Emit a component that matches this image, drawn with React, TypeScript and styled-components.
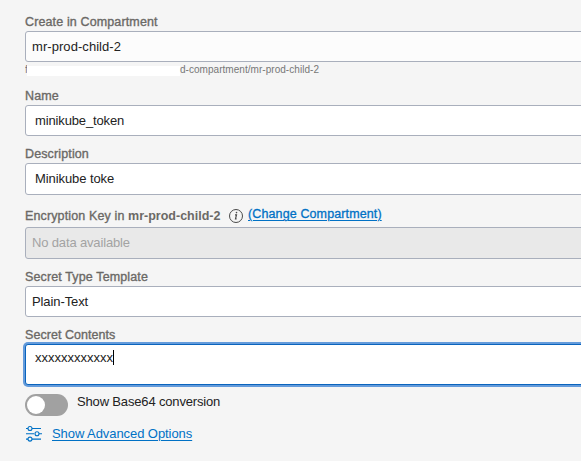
import React from "react";
import styled, { createGlobalStyle } from "styled-components";

const GlobalStyle = createGlobalStyle`
  * { box-sizing: border-box; }
  body { margin: 0; background: #f5f5f5; overflow: hidden; }
`;

const Form = styled.main`
  width: 100%;
  height: 461px;
  padding: 13px 0 0 25px;
  overflow: hidden;
  background: #f5f5f5;
  color: #222;
  font: 13px/18px "Liberation Sans", Arial, sans-serif;
`;

const Field = styled.section<{ $height: number }>`
  height: ${(p) => p.$height}px;
`;

const LabelRow = styled.div<{ $height?: number }>`
  display: flex;
  height: ${(p) => p.$height ?? 18}px;
  white-space: nowrap;
`;

const Label = styled.label<{ $width: number; $spacing?: number }>`
  width: ${(p) => p.$width}px;
  color: #6b6966;
  font-size: 12.5px;
  letter-spacing: ${(p) => p.$spacing ?? 0.13}px;
  -webkit-text-stroke: 0.35px #6b6966;

  b {
    letter-spacing: 0;
    -webkit-text-stroke: 0;
  }
`;

const Control = styled.div<{ $inset?: number; $height?: number; $tone?: "soft" | "disabled" }>`
  display: flex;
  align-items: center;
  width: 570px;
  height: ${(p) => p.$height ?? 31}px;
  padding-left: ${(p) => p.$inset ?? 6}px;
  border: 1px solid #a9afbc;
  border-radius: 3px;
  background: ${(p) => (p.$tone === "disabled" ? "#e9e9e9" : p.$tone === "soft" ? "#fcfcfc" : "#fff")};
  color: ${(p) => (p.$tone === "disabled" ? "#a3a3a3" : "#222")};
`;

const TextBox = styled(Control)`
  align-items: flex-start;
  padding-top: 4px;
  border-color: #0a64bd;
  box-shadow: 0 0 0 2px #649bdb;
`;

const Caret = styled.span`
  width: 1px;
  height: 15px;
  margin-top: 1px;
  background: #000;
`;

const Value = styled.span<{ $spacing?: number }>`
  letter-spacing: ${(p) => p.$spacing ?? 0}px;
  white-space: nowrap;
`;

const Path = styled.div`
  display: flex;
  height: 16px;
  color: #777;
  font-size: 10px;
  line-height: 16px;
`;

const PathStart = styled.span`
  width: 2px;
  overflow: hidden;
`;

const Redaction = styled.span`
  width: 153px;
  height: 10px;
  margin-top: 4px;
  background: #fff;
`;

const Link = styled.a<{ $spacing?: number }>`
  color: #0071c5;
  text-decoration: underline;
  text-underline-offset: 2px;
  text-decoration-thickness: 1px;
  letter-spacing: ${(p) => p.$spacing ?? 0}px;
`;

const ChangeLink = styled(Link)`
  margin: -2px 0 0 4px;
  font-size: 12.5px;
  -webkit-text-stroke: 0.3px #0071c5;
`;

const InfoIcon = styled.svg`
  width: 16px;
  height: 16px;
  margin-top: 1px;
`;

const ToggleRow = styled.div`
  display: flex;
  height: 38px;
  padding-top: 6px;
`;

const ToggleText = styled(Value)`
  padding-top: 2px;
`;

const Switch = styled.span`
  width: 43px;
  height: 22px;
  margin: 3px 9px 0 0;
  padding: 2px;
  border-radius: 11px;
  background: #a1a1a1;
`;

const Knob = styled.span`
  display: block;
  width: 18px;
  height: 18px;
  border-radius: 50%;
  background: #fff;
`;

const OptionsRow = styled.div`
  display: flex;
  gap: 10px;
  padding-top: 2px;
`;

const SlidersIcon = styled.svg`
  width: 17px;
  height: 18px;
`;

export default function App() {
  return (
    <>
      <GlobalStyle />
      <Form>
        <Field $height={74}>
          <LabelRow><Label $width={150}>Create in Compartment</Label></LabelRow>
          <Control $tone="soft"><Value $spacing={0.06}>mr-prod-child-2</Value></Control>
          <Path>
            <PathStart>f</PathStart><Redaction />
            <Value $spacing={0.04}>d-compartment/mr-prod-child-2</Value>
          </Path>
        </Field>
        <Field $height={58}>
          <LabelRow><Label $width={100}>Name</Label></LabelRow>
          <Control $inset={9}><Value $spacing={-0.14}>minikube_token</Value></Control>
        </Field>
        <Field $height={62}>
          <LabelRow><Label $width={100}>Description</Label></LabelRow>
          <Control $inset={9} $height={32}><Value $spacing={-0.08}>Minikube toke</Value></Control>
        </Field>
        <Field $height={61}>
          <LabelRow $height={20}>
            <Label $width={203}>Encryption Key in <b>mr-prod-child-2</b></Label>
            <InfoIcon viewBox="0 0 16 16" fill="none" stroke="#4a4a4a">
              <circle cx="8" cy="8" r="6.5" />
              <path d="M7 6.8h1.5l-1 4h1.1" strokeWidth="1.2" />
              <circle cx="8.5" cy="4.6" r=".8" fill="#4a4a4a" stroke="none" />
            </InfoIcon>
            <ChangeLink $spacing={0.12}>(Change Compartment)</ChangeLink>
          </LabelRow>
          <Control $tone="disabled" $height={32}><Value $spacing={-0.15}>No data available</Value></Control>
        </Field>
        <Field $height={58}>
          <LabelRow><Label $width={150}>Secret Type Template</Label></LabelRow>
          <Control><Value $spacing={-0.1}>Plain-Text</Value></Control>
        </Field>
        <Field $height={59}>
          <LabelRow><Label $width={150} $spacing={0.05}>Secret Contents</Label></LabelRow>
          <TextBox $inset={9} $height={41}><Value>xxxxxxxxxxxx</Value><Caret /></TextBox>
        </Field>
        <ToggleRow>
          <Switch><Knob /></Switch><ToggleText $spacing={-0.16}>Show Base64 conversion</ToggleText>
        </ToggleRow>
        <OptionsRow>
          <SlidersIcon viewBox="0 0 17 18" fill="none" stroke="#0071c5" strokeWidth="1.1">
            <path d="M1 3.5h2M7 3.5h9M1 8.8h8M14 8.8h3M1 14.1h2M7 14.1h9" />
            <circle cx="5" cy="3.5" r="2" /><circle cx="12" cy="8.8" r="2" /><circle cx="5" cy="14.1" r="2" />
          </SlidersIcon>
          <Link $spacing={-0.07}>Show Advanced Options</Link>
        </OptionsRow>
      </Form>
    </>
  );
}
